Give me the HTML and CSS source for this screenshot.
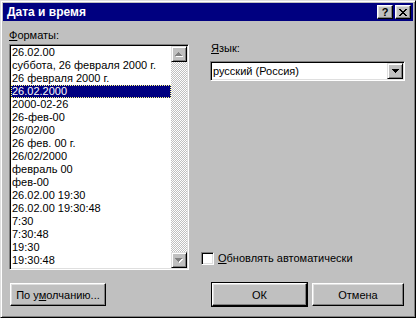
FILE: index.html
```html
<html>
<head>
    <link rel="stylesheet" href="styles.css">
</head>
<body>
    <div class="window">
        <div class="titlebar">
            <span class="title">Дата и время</span>
            <div class="caption-buttons">
                <span class="cap-btn help">?</span>
                <span class="cap-btn">
                    <svg width="8" height="7" viewBox="0 0 8 7" shape-rendering="crispEdges">
                        <path fill="#000" d="M0 0h2v1H0z M6 0h2v1H6z M1 1h2v1H1z M5 1h2v1H5z M2 2h4v1H2z M3 3h2v1H3z M2 4h4v1H2z M1 5h2v1H1z M5 5h2v1H5z M0 6h2v1H0z M6 6h2v1H6z"/>
                    </svg>
                </span>
            </div>
        </div>

        <div class="body">
            <div class="main">
                <div class="col-left">
                    <span class="label"><u>Ф</u>орматы:</span>
                    <div class="listbox">
                        <ul class="items">
                            <li>26.02.00</li>
                            <li>суббота, 26 февраля 2000 г.</li>
                            <li>26 февраля 2000 г.</li>
                            <li class="selected">26.02.2000</li>
                            <li>2000-02-26</li>
                            <li>26-фев-00</li>
                            <li>26/02/00</li>
                            <li>26 фев. 00 г.</li>
                            <li>26/02/2000</li>
                            <li>февраль 00</li>
                            <li>фев-00</li>
                            <li>26.02.00 19:30</li>
                            <li>26.02.00 19:30:48</li>
                            <li>7:30</li>
                            <li>7:30:48</li>
                            <li>19:30</li>
                            <li>19:30:48</li>
                        </ul>
                        <div class="scrollbar">
                            <div class="sb-btn">
                                <svg width="8" height="5" viewBox="0 0 8 5" shape-rendering="crispEdges">
                                    <path fill="#fff" d="M4 1h1v1H4z M3 2h3v1H3z M2 3h5v1H2z M1 4h7v1H1z"/>
                                    <path fill="#808080" d="M3 0h1v1H3z M2 1h3v1H2z M1 2h5v1H1z M0 3h7v1H0z"/>
                                </svg>
                            </div>
                            <div class="sb-track"></div>
                            <div class="sb-btn">
                                <svg width="8" height="5" viewBox="0 0 8 5" shape-rendering="crispEdges">
                                    <path fill="#fff" d="M1 1h7v1H1z M2 2h5v1H2z M3 3h3v1H3z M4 4h1v1H4z"/>
                                    <path fill="#808080" d="M0 0h7v1H0z M1 1h5v1H1z M2 2h3v1H2z M3 3h1v1H3z"/>
                                </svg>
                            </div>
                        </div>
                    </div>
                </div>

                <div class="col-right">
                    <span class="label lang-label"><u>Я</u>зык:</span>
                    <div class="combo">
                        <span class="combo-text">русский (Россия)</span>
                        <span class="combo-btn">
                            <svg width="7" height="4" viewBox="0 0 7 4" shape-rendering="crispEdges">
                                <path fill="#000" d="M0 0h7v1H0z M1 1h5v1H1z M2 2h3v1H2z M3 3h1v1H3z"/>
                            </svg>
                        </span>
                    </div>
                    <div class="check-row">
                        <span class="checkbox"></span>
                        <span><u>О</u>бновлять автоматически</span>
                    </div>
                </div>
            </div>

            <div class="footer">
                <button class="btn btn-wide">По у<u>м</u>олчанию...</button>
                <div class="footer-right">
                    <span class="btn-default"><button class="btn btn-ok">ОК</button></span>
                    <button class="btn btn-cancel">Отмена</button>
                </div>
            </div>
        </div>
    </div>
</body>
</html>
```

FILE: styles.css
```css
/* Base */
body {
    margin: 0;
    font-family: "Liberation Sans", Arial, sans-serif;
    font-size: 11px;
    color: #000;
}

/* Dialog frame */
.window {
    width: 416px;
    height: 318px;
    box-sizing: border-box;
    background-color: #c0c0c0;
    border: 1px solid;
    border-color: #dfdfdf #000 #000 #dfdfdf;
    box-shadow: inset 1px 1px #fff, inset -1px -1px #808080;
    padding: 2px;
    display: flex;
    flex-direction: column;
}

/* Title bar */
.titlebar {
    height: 18px;
    background-color: #000080;
    color: #fff;
    display: flex;
    align-items: center;
    padding: 0 2px 0 4px;
}

.title {
    flex: 1;
    font-weight: bold;
    font-size: 12px;
    line-height: 18px;
}

.caption-buttons {
    display: flex;
    gap: 2px;
}

.cap-btn {
    width: 16px;
    height: 14px;
    box-sizing: border-box;
    background-color: #c0c0c0;
    border: 1px solid;
    border-color: #fff #000 #000 #fff;
    box-shadow: inset -1px -1px #808080, inset 1px 1px #dfdfdf;
    display: flex;
    align-items: center;
    justify-content: center;
    color: #000;
}

.help {
    font-weight: bold;
    font-size: 11px;
    line-height: 12px;
}

/* Content */
.body {
    flex: 1;
    padding: 8px 8px 0 6px;
    display: flex;
    flex-direction: column;
}

.main {
    display: flex;
}

.label {
    display: block;
    height: 13px;
    line-height: 13px;
}

.col-left {
    width: 180px;
    display: flex;
    flex-direction: column;
}

.col-left .label {
    margin-bottom: 2px;
}

/* List box */
.listbox {
    height: 226px;
    box-sizing: border-box;
    border: 1px solid;
    border-color: #808080 #fff #fff #808080;
    box-shadow: inset 1px 1px #000, inset -1px -1px #dfdfdf;
    padding: 1px;
    background-color: #fff;
    display: flex;
}

.items {
    flex: 1;
    list-style: none;
    margin: 0;
    padding: 0;
    overflow: hidden;
}

.items li {
    height: 13px;
    line-height: 13px;
    padding-left: 1px;
    white-space: nowrap;
}

.items li.selected {
    background-color: #000080;
    color: #fff;
    outline: 1px dotted #ffff7f;
    outline-offset: -1px;
}

.scrollbar {
    width: 16px;
    display: flex;
    flex-direction: column;
    background-image: conic-gradient(#fff 25%, #c0c0c0 0 50%, #fff 0 75%, #c0c0c0 0);
    background-size: 2px 2px;
}

.sb-btn {
    height: 16px;
    box-sizing: border-box;
    background-color: #c0c0c0;
    border: 1px solid;
    border-color: #dfdfdf #000 #000 #dfdfdf;
    box-shadow: inset 1px 1px #fff, inset -1px -1px #808080;
    display: flex;
    align-items: center;
    justify-content: center;
}

.sb-track {
    flex: 1;
}

/* Right column */
.col-right {
    width: 204px;
    margin-left: 12px;
    display: flex;
    flex-direction: column;
}

.lang-label {
    margin-top: 13px;
    padding-left: 10px;
}

.combo {
    margin-top: 6px;
    margin-left: 9px;
    height: 20px;
    box-sizing: border-box;
    border: 1px solid;
    border-color: #808080 #fff #fff #808080;
    box-shadow: inset 1px 1px #000, inset -1px -1px #dfdfdf;
    padding: 1px;
    background-color: #fff;
    display: flex;
}

.combo-text {
    flex: 1;
    padding-left: 1px;
    line-height: 16px;
}

.combo-btn {
    width: 16px;
    box-sizing: border-box;
    background-color: #c0c0c0;
    border: 1px solid;
    border-color: #dfdfdf #000 #000 #dfdfdf;
    box-shadow: inset 1px 1px #fff, inset -1px -1px #808080;
    display: flex;
    align-items: center;
    justify-content: center;
}

.check-row {
    margin-top: auto;
    margin-bottom: 5px;
    display: flex;
    align-items: center;
    gap: 4px;
    line-height: 13px;
}

.checkbox {
    width: 13px;
    height: 13px;
    box-sizing: border-box;
    border: 1px solid;
    border-color: #808080 #fff #fff #808080;
    box-shadow: inset 1px 1px #000, inset -1px -1px #dfdfdf;
    background-color: #fff;
}

/* Buttons */
.footer {
    margin-top: 12px;
    height: 25px;
    display: flex;
    align-items: center;
    justify-content: space-between;
}

.btn {
    height: 23px;
    padding: 0;
    box-sizing: border-box;
    background-color: #c0c0c0;
    border: 1px solid;
    border-color: #fff #000 #000 #fff;
    box-shadow: inset -1px -1px #808080, inset 1px 1px #dfdfdf;
    font-family: inherit;
    font-size: 11px;
    color: #000;
}

.btn-wide {
    width: 96px;
    margin-left: 1px;
}

.footer-right {
    display: flex;
    align-items: center;
    margin-right: 1px;
}

.btn-default {
    display: flex;
    border: 1px solid #000;
}

.btn-ok {
    width: 95px;
}

.btn-cancel {
    width: 92px;
    margin-left: 4px;
}
```
